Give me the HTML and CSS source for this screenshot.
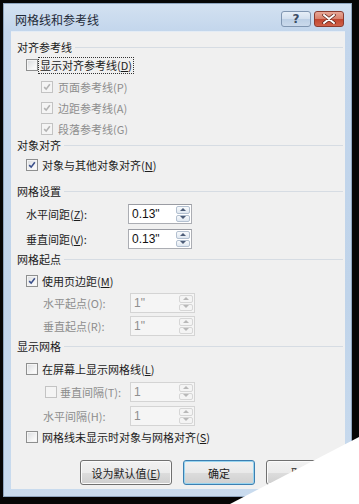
FILE: index.html
```html
<!DOCTYPE html>
<html lang="zh-CN">
<head>
  <meta charset="UTF-8" />
  <title>网格线和参考线</title>
  <link rel="stylesheet" href="styles.css">
</head>
<body>
  <div class="window">
    <div class="titlebar">
      <span class="title">网格线和参考线</span>
      <div class="caption">
        <span class="cap-btn help">?</span>
        <span class="cap-btn close">
          <svg width="14" height="10" viewBox="0 0 14 10"><path d="M2 1 L12 9 M12 1 L2 9" stroke="#5a2018" stroke-width="3.4" stroke-linecap="round"/><path d="M2 1 L12 9 M12 1 L2 9" stroke="#fff" stroke-width="2" stroke-linecap="round"/></svg>
        </span>
      </div>
    </div>

    <div class="client">
      <!-- 对齐参考线 -->
      <div class="group">
        <div class="head">对齐参考线</div>
        <div class="check-row">
          <span class="box"></span>
          <span class="label focus">显示对齐参考线(<u>D</u>)</span>
        </div>
        <div class="sub-list">
          <div class="check-row sub off">
            <span class="box checked"><svg viewBox="0 0 12 12"><path d="M2.6 6.2 L5 8.6 L9.4 2.8"/></svg></span>
            <span class="label">页面参考线(P)</span>
          </div>
          <div class="check-row sub off">
            <span class="box checked"><svg viewBox="0 0 12 12"><path d="M2.6 6.2 L5 8.6 L9.4 2.8"/></svg></span>
            <span class="label">边距参考线(A)</span>
          </div>
          <div class="clip">
            <div class="check-row sub off">
              <span class="box checked"><svg viewBox="0 0 12 12"><path d="M2.6 6.2 L5 8.6 L9.4 2.8"/></svg></span>
              <span class="label">段落参考线(G)</span>
            </div>
          </div>
        </div>
      </div>

      <!-- 对象对齐 -->
      <div class="group tight">
        <div class="head">对象对齐</div>
        <div class="check-row near">
          <span class="box checked"><svg viewBox="0 0 12 12"><path d="M2.6 6.2 L5 8.6 L9.4 2.8"/></svg></span>
          <span class="label">对象与其他对象对齐(<u>N</u>)</span>
        </div>
      </div>

      <!-- 网格设置 -->
      <div class="group wide">
        <div class="head">网格设置</div>
        <div class="fields">
          <div class="field-row">
            <span class="name">水平间距(<u>Z</u>):</span>
            <div class="spin">
              <span class="val">0.13"</span>
              <span class="arrows"><span class="up"></span><span class="down"></span></span>
            </div>
          </div>
          <div class="field-row">
            <span class="name">垂直间距(<u>V</u>):</span>
            <div class="spin">
              <span class="val">0.13"</span>
              <span class="arrows"><span class="up"></span><span class="down"></span></span>
            </div>
          </div>
        </div>
      </div>

      <!-- 网格起点 -->
      <div class="group tight">
        <div class="head">网格起点</div>
        <div class="fields">
          <div class="check-row">
            <span class="box checked"><svg viewBox="0 0 12 12"><path d="M2.6 6.2 L5 8.6 L9.4 2.8"/></svg></span>
            <span class="label">使用页边距(<u>M</u>)</span>
          </div>
          <div class="field-row sub off">
            <span class="name">水平起点(O):</span>
            <div class="spin">
              <span class="val">1"</span>
              <span class="arrows"><span class="up"></span><span class="down"></span></span>
            </div>
          </div>
          <div class="field-row sub off">
            <span class="name">垂直起点(R):</span>
            <div class="spin">
              <span class="val">1"</span>
              <span class="arrows"><span class="up"></span><span class="down"></span></span>
            </div>
          </div>
        </div>
      </div>

      <!-- 显示网格 -->
      <div class="group tight">
        <div class="head">显示网格</div>
        <div class="fields loose">
          <div class="check-row">
            <span class="box"></span>
            <span class="label">在屏幕上显示网格线(<u>L</u>)</span>
          </div>
          <div class="field-row sub-check off">
            <span class="name"><span class="box"></span><span class="label">垂直间隔(T):</span></span>
            <div class="spin">
              <span class="val">1</span>
              <span class="arrows"><span class="up"></span><span class="down"></span></span>
            </div>
          </div>
          <div class="field-row sub off">
            <span class="name">水平间隔(H):</span>
            <div class="spin">
              <span class="val">1</span>
              <span class="arrows"><span class="up"></span><span class="down"></span></span>
            </div>
          </div>
          <div class="check-row last">
            <span class="box"></span>
            <span class="label">网格线未显示时对象与网格对齐(<u>S</u>)</span>
          </div>
        </div>
      </div>

      <div class="buttons">
        <span class="btn wide-btn">设为默认值(<u>E</u>)</span>
        <span class="btn default">确定</span>
        <span class="btn">取消</span>
      </div>
    </div>
  </div>

  <div class="curl"></div>
</body>
</html>
```

FILE: styles.css
```css
body {
  margin: 0;
  width: 359px;
  height: 504px;
  overflow: hidden;
  position: relative;
  background: #060606;
  font-family: "Noto Sans CJK SC", sans-serif;
  font-size: 11px;
  color: #1c1c1c;
}

/* window frame */
.window {
  margin: 3px 0 0 3px;
  width: 349px;
  height: 494px;
  box-sizing: border-box;
  border: 1px solid #8ea5bf;
  padding: 0 6px 0 7px;
  background: linear-gradient(#d3e1f1, #c3d6ec 27px, #c0d4ea 60%, #c9dbee);
}
.titlebar {
  height: 27px;
  display: flex;
  justify-content: space-between;
  align-items: flex-start;
}
.title {
  padding: 7px 0 0 4px;
  font-size: 12px;
  line-height: 17px;
  color: #1e2a38;
}
.caption {
  display: flex;
  gap: 3px;
  margin: 7px 1px 0 0;
}
.cap-btn {
  width: 30px;
  height: 16px;
  box-sizing: border-box;
  border-radius: 3px;
  display: flex;
  align-items: center;
  justify-content: center;
}
.help {
  border: 1px solid #8096b1;
  background: linear-gradient(#e6eef7, #d2dfee 50%, #bccfe5 51%, #cbdaec);
  color: #3b4c63;
  font: bold 12px "DejaVu Sans", sans-serif;
  line-height: 14px;
}
.close {
  border: 1px solid #8b3b2f;
  background: linear-gradient(#e8a797, #d7806b 50%, #c1452f 51%, #d0624a);
}

/* client area */
.client {
  height: 458px;
  box-sizing: border-box;
  background: #f0f0f0;
  padding: 6px 2px 0 6px;
  border-top: 1px solid #e4ecf5;
}
.group.tight { margin-top: 1px; }
.group.wide { margin-top: 8px; }

.head {
  display: flex;
  align-items: center;
  gap: 3px;
  height: 18px;
  line-height: 18px;
  color: #1a1a1a;
}
.head::after {
  content: "";
  flex: 1;
  height: 1px;
  background: #d6dce3;
}

.check-row {
  display: flex;
  align-items: center;
  height: 18px;
  line-height: 18px;
  margin-left: 9px;
}
.check-row.near { margin-top: 2px; }
.check-row .label { padding-left: 4px; }
.check-row.sub { margin-left: 24px; }
.check-row.sub .label { padding-left: 5px; }
.check-row.last { margin-top: -2px; }
.label.focus {
  margin-left: 0;
  padding: 0 1px;
  border: 1px dotted #333;
  line-height: 15px;
}
.check-row .box + .label.focus { padding-left: 1px; }

.sub-list {
  display: flex;
  flex-direction: column;
  gap: 3px;
  margin-top: 4px;
}
.clip {
  height: 15px;
  overflow: hidden;
}

/* checkbox */
.box {
  width: 12px;
  height: 12px;
  box-sizing: border-box;
  border: 1px solid #8e8f8f;
  background: linear-gradient(135deg, #d9dbde, #f7f7f7 70%, #ffffff);
  box-shadow: inset 0 0 0 1px #f4f4f4;
  flex: none;
}
.box svg {
  display: block;
  width: 10px;
  height: 10px;
}
.box svg path {
  fill: none;
  stroke: #3a4f8a;
  stroke-width: 1.9;
}
.off { color: #8d8d8d; }
.off .box {
  border-color: #c3c3c3;
  background: #f4f4f4;
  box-shadow: none;
}
.off .box svg path { stroke: #b2b2b2; }

/* spin fields */
.fields {
  display: flex;
  flex-direction: column;
  gap: 3px;
  margin-top: 4px;
}
.group.wide .fields { gap: 5px; }
.fields.loose { gap: 4px; margin-top: 5px; }

.field-row {
  display: flex;
  align-items: center;
  height: 20px;
  margin-left: 9px;
}
.field-row .name {
  width: 102px;
  line-height: 18px;
  display: flex;
  align-items: center;
}
.field-row.sub { margin-left: 26px; }
.field-row.sub .name { width: 87px; }
.field-row.sub-check { margin-left: 28px; }
.field-row.sub-check .name { width: 85px; }
.field-row.sub-check .label { padding-left: 3px; }

.spin {
  display: flex;
  width: 64px;
  height: 20px;
  box-sizing: border-box;
  border: 1px solid #abadb3;
  border-top-color: #9a9ca3;
  background: #fff;
}
.off .spin {
  width: 65px;
  border-color: #d4d4d4;
  background: #f5f5f5;
}
.val {
  flex: 1;
  padding-left: 3px;
  font: 12px "Liberation Sans", sans-serif;
  line-height: 18px;
  color: #111;
}
.off .val { color: #8f8f8f; }

.arrows {
  width: 15px;
  display: flex;
  flex-direction: column;
  gap: 1px;
  padding: 1px 1px 1px 0;
  box-sizing: border-box;
}
.arrows span {
  flex: 1;
  border: 1px solid #b3c0d0;
  border-radius: 2px;
  background: linear-gradient(#f8fafc, #dfe7f0);
  position: relative;
}
.arrows span::after {
  content: "";
  position: absolute;
  left: 50%;
  top: 50%;
  margin: -2px 0 0 -3px;
  border-left: 3px solid transparent;
  border-right: 3px solid transparent;
}
.arrows .up::after { border-bottom: 3px solid #4d5d78; }
.arrows .down::after { border-top: 3px solid #4d5d78; }
.off .arrows span {
  border-color: #d6d6d6;
  background: #f4f4f4;
}
.off .arrows .up::after { border-bottom-color: #b8b8b8; }
.off .arrows .down::after { border-top-color: #b8b8b8; }

/* buttons */
.buttons {
  display: flex;
  gap: 11px;
  margin: 14px 0 0 63px;
}
.btn {
  width: 72px;
  height: 25px;
  box-sizing: border-box;
  border: 1px solid #707070;
  border-radius: 3px;
  background: linear-gradient(#f2f2f2, #ebebeb 50%, #dddddd 51%, #cfcfcf);
  box-shadow: inset 0 0 0 1px #fbfbfb;
  display: flex;
  align-items: center;
  justify-content: center;
  line-height: 18px;
}
.btn.wide-btn { width: 92px; }
.btn.default {
  border-color: #3c7fb1;
  box-shadow: inset 0 0 0 1px #98d4ef;
  background: linear-gradient(#eaf6fd, #d9f0fc 50%, #bee6fd 51%, #a7d9f5);
  background: linear-gradient(#f1f1f1, #e9e9e9 50%, #dcdcdc 51%, #d0d0d0);
}

/* white page curl over the corner */
.curl {
  position: absolute;
  left: 230px;
  top: 437px;
  width: 129px;
  height: 67px;
  background: #fff;
  clip-path: polygon(0 100%, 100% 0, 100% 100%);
}
```
